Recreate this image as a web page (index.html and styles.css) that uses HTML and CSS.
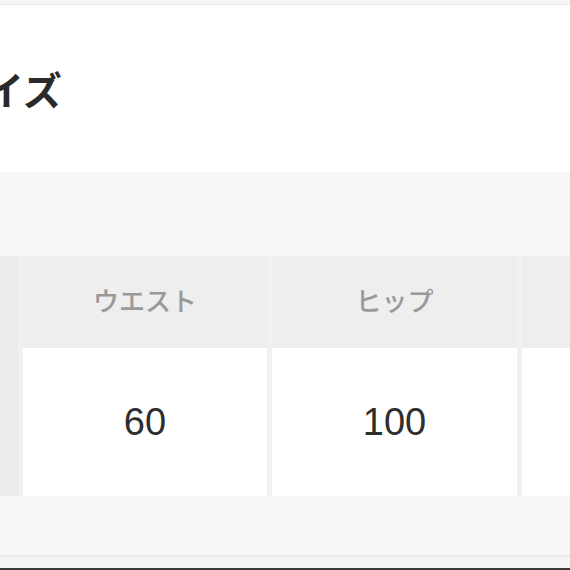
FILE: index.html
```html
<!DOCTYPE html>
<html lang="ja">
<head>
<meta charset="utf-8">
<link rel="stylesheet" href="styles.css">
</head>
<body>
<div class="page">
  <div class="topbar"></div>
  <header class="title-area">
    <h1 class="title">サイズ</h1>
  </header>
  <section class="size-section">
    <div class="size-table">
      <div class="cell head side"></div>
      <div class="cell head">ウエスト</div>
      <div class="cell head">ヒップ</div>
      <div class="cell head"></div>
      <div class="cell side"></div>
      <div class="cell value">60</div>
      <div class="cell value">100</div>
      <div class="cell value"></div>
    </div>
  </section>
  <div class="bottom-line"></div>
  <div class="bottom-strip"></div>
  <div class="bottom-dark"></div>
</div>
</body>
</html>
```

FILE: styles.css
```css
html, body {
  margin: 0;
  padding: 0;
  background: #ffffff;
}
.page {
  width: 570px;
  height: 570px;
  overflow: hidden;
  display: flex;
  flex-direction: column;
  font-family: "Noto Sans CJK JP", "Noto Sans", sans-serif;
}
.topbar {
  height: 4px;
  background: #f5f5f5;
  border-bottom: 1px solid #ebebeb;
  flex: none;
}
.title-area {
  height: 167px;
  flex: none;
  display: flex;
  align-items: center;
  background: #ffffff;
}
.title {
  margin: 0 0 0 -54px;
  font-size: 39px;
  font-weight: 700;
  color: #2a2a2a;
  line-height: 1;
  letter-spacing: 0;
  white-space: nowrap;
}
.size-section {
  flex: none;
  height: 383px;
  background: #f7f7f7;
  padding-top: 84px;
  box-sizing: border-box;
}
.size-table {
  display: grid;
  grid-template-columns: 18px 244px 245px 1fr;
  grid-template-rows: 92px 148px;
  column-gap: 5px;
  background: #f1f1f1;
}
.cell {
  display: flex;
  align-items: center;
  justify-content: center;
}
.head {
  background: #eeeeee;
  color: #999999;
  font-size: 26px;
  font-weight: 500;
  padding-bottom: 5px;
  box-sizing: border-box;
}
.side {
  background: #ececec;
}
.value {
  background: #ffffff;
  color: #2e2e2e;
  font-family: "Liberation Sans", "Noto Sans", sans-serif;
  font-size: 38px;
  font-weight: 400;
}
.bottom-line {
  height: 2px;
  background: #e9e9e9;
  flex: none;
}
.bottom-strip {
  height: 11px;
  background: #f5f5f5;
  flex: none;
}
.bottom-dark {
  height: 2px;
  background: #3a3a3a;
  flex: none;
}
```
